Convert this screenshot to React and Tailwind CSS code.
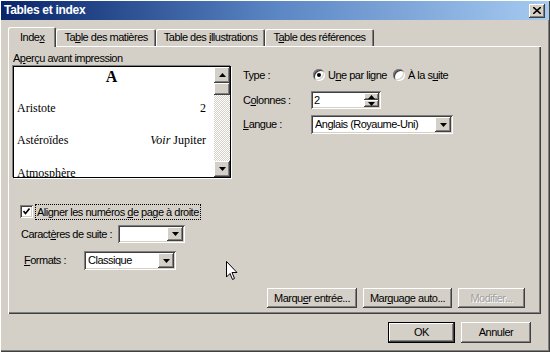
import React from 'react';

// bordures "classiques" façon Windows 2000
const raised = 'shadow-[inset_-1px_-1px_#404040,inset_1px_1px_#ffffff,inset_-2px_-2px_#808080,inset_2px_2px_#d4d0c8]';
const sunken = 'shadow-[inset_1px_1px_#808080,inset_-1px_-1px_#ffffff,inset_2px_2px_#404040,inset_-2px_-2px_#d4d0c8]';

const DownArrow = () => (
  <svg width="7" height="4" viewBox="0 0 7 4">
    <polygon points="0,0 7,0 3.5,4" fill="#000" />
  </svg>
);

const UpArrow = () => (
  <svg width="7" height="4" viewBox="0 0 7 4">
    <polygon points="0,4 7,4 3.5,0" fill="#000" />
  </svg>
);

const Select = ({ className, value }) => (
  <div className={`flex items-center bg-white pl-[4px] pr-[2px] ${sunken} ${className}`}>
    <span className="flex-1 truncate">{value}</span>
    <div className={`w-[16px] h-[calc(100%-4px)] bg-[#d4d0c8] flex items-center justify-center ${raised}`}>
      <DownArrow />
    </div>
  </div>
);

const Button = ({ className, children, disabled }) => (
  <div
    className={`flex items-center justify-center bg-[#d4d0c8] ${raised} ${className} ${
      disabled ? 'text-[#a0a0a0] [text-shadow:1px_1px_#fff]' : 'text-black'
    }`}
  >
    {children}
  </div>
);

const Radio = ({ checked }) => (
  <div className="w-[12px] h-[12px] rounded-full bg-white shadow-[inset_1px_1px_#808080,inset_-1px_-1px_#fff,inset_2px_2px_#404040,inset_-2px_-2px_#d4d0c8] flex items-center justify-center">
    {checked && <div className="w-[4px] h-[4px] rounded-full bg-black" />}
  </div>
);

const Tab = ({ children, active }) =>
  active ? (
    <div className="relative z-10 h-[20px] -mb-[1px] px-[12px] pt-[4px] bg-[#d4d0c8] rounded-t-[2px] shadow-[inset_1px_1px_#fff,inset_-1px_0_#404040,inset_-2px_0_#808080]">
      {children}
    </div>
  ) : (
    <div className="h-[17px] px-[8px] pt-[2px] bg-[#d4d0c8] rounded-t-[2px] shadow-[inset_1px_1px_#fff,inset_-1px_0_#404040,inset_-2px_0_#808080]">
      {children}
    </div>
  );

export default function App() {
  return (
    <div className="relative w-[550px] h-[352px] overflow-hidden bg-[#d4d0c8] text-[11px] leading-[13px] tracking-[-0.5px] text-black font-['Liberation_Sans',Arial,sans-serif] shadow-[inset_1px_1px_#fff,inset_-1px_-1px_#404040,inset_-2px_-2px_#808080]">
      {/* barre de titre */}
      <div className="mx-[1px] mt-[1px] h-[19px] flex items-center justify-between pl-[3px] pr-[4px] bg-gradient-to-r from-[#0a246a] via-[#5b86c4] to-[#a6caf0]">
        <span className="text-white font-bold text-[12px] tracking-[-0.3px]">Tables et index</span>
        <div className={`w-[16px] h-[14px] bg-[#d4d0c8] flex items-center justify-center ${raised}`}>
          <svg width="8" height="7" viewBox="0 0 8 7">
            <path d="M0 0 L8 7 M8 0 L0 7" stroke="#000" strokeWidth="1.6" />
          </svg>
        </div>
      </div>

      <div className="pl-[8px] pr-[9px] pt-[6px]">
        {/* onglets */}
        <div className="flex items-end h-[20px]">
          <Tab active>
            <span>
              Inde<u>x</u>
            </span>
          </Tab>
          <Tab>
            <span>
              Ta<u>b</u>le des matières
            </span>
          </Tab>
          <Tab>
            <span>
              Table des <u>i</u>llustrations
            </span>
          </Tab>
          <Tab>
            <span>
              T<u>a</u>ble des références
            </span>
          </Tab>
        </div>

        {/* panneau */}
        <div className="h-[268px] pl-[5px] pr-[16px] pt-[6px] shadow-[inset_1px_1px_#fff,inset_-1px_-1px_#404040,inset_-2px_-2px_#808080]">
          <div className="flex">
            <div>
              <div>
                A<u>p</u>erçu avant impression
              </div>
              <div className="mt-[1px] w-[218px] h-[112px] flex bg-white border border-black shadow-[-1px_-1px_#808080,1px_1px_#fff] font-['Liberation_Serif','Times_New_Roman',serif] text-[12px] leading-[14px] tracking-normal">
                <div className="flex-1 pl-[3px] pr-[8px] overflow-hidden">
                  <div className="text-center font-bold text-[16px] leading-[18px] mt-[1px]">A</div>
                  <div className="flex justify-between mt-[15px]">
                    <span>Aristote</span>
                    <span>2</span>
                  </div>
                  <div className="flex justify-between mt-[18px]">
                    <span>Astéroïdes</span>
                    <span>
                      <i>Voir</i> Jupiter
                    </span>
                  </div>
                  <div className="mt-[19px]">Atmosphère</div>
                </div>
                <div className="w-[16px] flex flex-col bg-[repeating-conic-gradient(#ffffff_0_25%,#d4d0c8_0_50%)] bg-[length:2px_2px]">
                  <div className={`h-[16px] bg-[#d4d0c8] flex items-center justify-center ${raised}`}>
                    <UpArrow />
                  </div>
                  <div className={`h-[12px] bg-[#d4d0c8] ${raised}`} />
                  <div className="flex-1" />
                  <div className={`h-[16px] bg-[#d4d0c8] flex items-center justify-center ${raised}`}>
                    <DownArrow />
                  </div>
                </div>
              </div>
            </div>

            <div className="ml-[12px] pt-[15px]">
              <div className="flex items-center h-[16px]">
                <span className="w-[70px]">Type :</span>
                <Radio checked />
                <span className="ml-[3px]">
                  U<u>n</u>e par ligne
                </span>
                <div className="ml-[6px]">
                  <Radio />
                </div>
                <span className="ml-[3px]">
                  À la s<u>u</u>ite
                </span>
              </div>
              <div className="flex items-center h-[18px] mt-[8px]">
                <span className="w-[68px]">
                  C<u>o</u>lonnes :
                </span>
                <div className={`w-[70px] h-[18px] flex items-center bg-white pl-[3px] pr-[2px] ${sunken}`}>
                  <span className="flex-1">2</span>
                  <div className="flex flex-col w-[15px] h-[14px]">
                    <div className={`flex-1 bg-[#d4d0c8] flex items-center justify-center ${raised}`}>
                      <UpArrow />
                    </div>
                    <div className={`flex-1 bg-[#d4d0c8] flex items-center justify-center ${raised}`}>
                      <DownArrow />
                    </div>
                  </div>
                </div>
              </div>
              <div className="flex items-center h-[19px] mt-[6px]">
                <span className="w-[68px]">
                  <u>L</u>angue :
                </span>
                <Select className="w-[142px] h-[19px]" value="Anglais (Royaume-Uni)" />
              </div>
            </div>
          </div>

          {/* options */}
          <div className="flex items-center h-[17px] mt-[25px] ml-[7px]">
            <div className={`w-[13px] h-[13px] bg-white flex items-center justify-center ${sunken}`}>
              <svg width="7" height="7" viewBox="0 0 7 7">
                <path d="M0.5 3 L2.5 5.5 L6.5 0.5" stroke="#000" strokeWidth="1.6" fill="none" />
              </svg>
            </div>
            <span className="ml-[2px] px-[1px] border border-dotted border-black leading-[14px]">
              Aligner les numéros <u>d</u>e page à droite
            </span>
          </div>
          <div className="flex items-center h-[18px] mt-[5px] ml-[8px]">
            <span className="w-[97px] whitespace-nowrap">
              Caract<u>è</u>res de suite :
            </span>
            <Select className="w-[67px] h-[18px]" value="" />
          </div>
          <div className="flex items-center h-[19px] mt-[8px] ml-[11px]">
            <span className="w-[60px]">
              <u>F</u>ormats :
            </span>
            <Select className="w-[92px] h-[19px]" value="Classique" />
          </div>

          <div className="flex justify-end gap-[6px] mt-[18px]">
            <Button className="w-[90px] h-[20px]">
              Marqu<u>e</u>r entrée...
            </Button>
            <Button className="w-[89px] h-[20px]">
              Mar<u>q</u>uage auto...
            </Button>
            <Button className="w-[67px] h-[20px]" disabled>
              Modifier...
            </Button>
          </div>
        </div>

        {/* boutons du bas */}
        <div className="flex justify-end gap-[6px] mt-[8px] pr-[10px]">
          <div className="border border-black">
            <Button className="w-[65px] h-[19px]">OK</Button>
          </div>
          <Button className="w-[70px] h-[21px]">Annuler</Button>
        </div>
      </div>

      {/* pointeur de souris */}
      <svg className="absolute left-[226px] top-[261px]" width="12" height="20" viewBox="0 0 12 20">
        <path d="M0.5 0.5 L0.5 16 L4 12.5 L6.5 18.5 L8.5 17.5 L6 11.5 L11 11.5 Z" fill="#fff" stroke="#000" strokeWidth="1" />
      </svg>
    </div>
  );
}
